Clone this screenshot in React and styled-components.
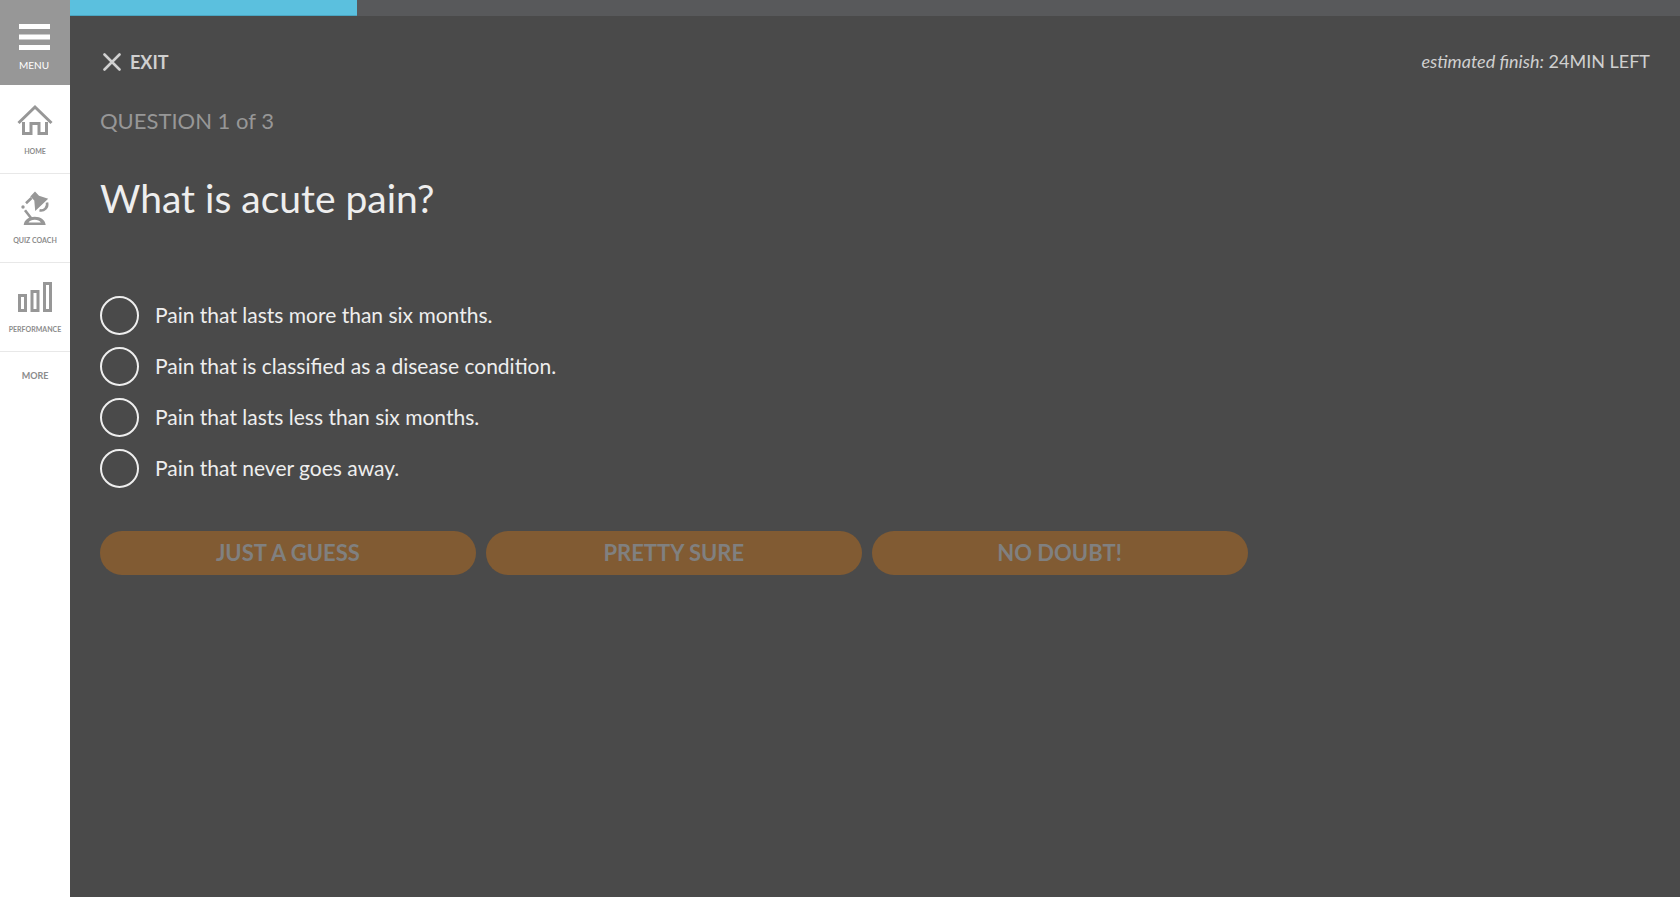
import React from "react";
import styled, { createGlobalStyle } from "styled-components";

const GlobalStyle = createGlobalStyle`
  *, *::before, *::after { box-sizing: border-box; }
  body {
    margin: 0;
    background: #4a4a4a;
    color: #eeeeee;
    font-family: Lato, "Liberation Sans", sans-serif;
  }
`;

const Shell = styled.div`
  display: flex;
  min-height: 100vh;
`;

const Sidebar = styled.nav`
  flex: 0 0 70px;
  display: flex;
  flex-direction: column;
  background: #ffffff;
`;

const MenuButton = styled.button`
  display: flex;
  flex-direction: column;
  align-items: center;
  gap: 8px;
  height: 85px;
  padding: 24px 2px 0 0;
  border: 0;
  background: #979797;
  color: #ffffff;
  font: 10px/14px Lato, sans-serif;
`;

const SideLink = styled.a`
  display: flex;
  flex-direction: column;
  align-items: center;
  gap: 6px;
  height: 89px;
  padding-top: 17px;
  border-bottom: 1px solid #e8e8e8;
  color: #8c8c8c;
  font-size: 7px;
  line-height: 14px;
  font-weight: 700;
  text-decoration: none;
`;

const MoreButton = styled.button`
  padding: 17px 0;
  border: 0;
  background: none;
  color: #8c8c8c;
  font: 700 9px/14px Lato, sans-serif;
`;

const Main = styled.main`
  flex: 1;
  min-width: 0;
`;

const ProgressTrack = styled.div`
  height: 16px;
  background: #58595b;
`;

const ProgressFill = styled.div`
  height: 100%;
  background: #5bc0de;
  border-bottom: 1px solid #4ba6c2;
`;

const TopBar = styled.header`
  display: flex;
  justify-content: space-between;
  align-items: flex-start;
  padding: 34px 30px 0;
`;

const ExitButton = styled.button`
  display: flex;
  align-items: center;
  gap: 9px;
  padding: 0 3px;
  border: 0;
  background: none;
  color: #d0d0d0;
  font: 700 18px/24px Lato, sans-serif;
`;

const Estimate = styled.p`
  margin: 0;
  color: #d0d0d0;
  font-size: 18px;
  line-height: 22px;
`;

const Quiz = styled.form`
  width: 75%;
  padding: 31px 30px;
`;

const Counter = styled.p`
  margin: 0;
  color: #979797;
  font-size: 22px;
  line-height: 32px;
`;

const Question = styled.h1`
  margin: 37px 0 0;
  font-size: 39px;
  line-height: 48px;
  font-weight: 400;
`;

const Answers = styled.fieldset`
  display: grid;
  gap: 12px;
  margin: 74px 0 0;
  padding: 0;
  border: 0;
`;

const Answer = styled.label`
  display: flex;
  align-items: flex-start;
  gap: 16px;
  font-size: 21px;
  line-height: 38px;
`;

const Radio = styled.input`
  appearance: none;
  width: 39px;
  height: 39px;
  margin: 0;
  border: 2px solid #eeeeee;
  border-radius: 50%;
  &:checked { background: #5bc0de; }
`;

const Choices = styled.div`
  display: grid;
  grid-template-columns: repeat(3, 1fr);
  gap: 10px;
  margin-top: 43px;
`;

const Choice = styled.button`
  height: 44px;
  padding: 0;
  border: 0;
  border-radius: 22px;
  background: #815b33;
  color: #808080;
  font: 700 22px/44px Lato, sans-serif;
`;

const MenuIcon = () => (
  <svg width="31" height="26" viewBox="0 0 31 26" fill="#fff" aria-hidden="true">
    <path d="M0 0h31v5H0zM0 10.500h31v5H0zM0 21h31v5H0z" />
  </svg>
);

const HomeIcon = () => (
  <svg width="36" height="36" viewBox="0 0 36 36" fill="none" stroke="#979797" strokeWidth="3" aria-hidden="true">
    <path d="M1.500 21 18 5l16.500 16" />
    <path d="M6.500 20v11.500h7.500V21.500h8v10h7.500V20" />
  </svg>
);

const LampIcon = () => (
  <svg width="36" height="36" viewBox="0 0 36 36" fill="none" stroke="#979797" aria-hidden="true">
    <path d="M18 .5 22 4.800 31.200 7.800 18.200 20 17.300 9.500 13.300 5.500z" fill="#979797" stroke="none" />
    <path d="M14.500 7 9 12.300M8 19.200l6.200 8" strokeWidth="2.600" />
    <circle cx="6" cy="16" r="1.700" fill="#979797" stroke="none" />
    <path d="M30 11.500a6.300 6.300 0 0 1-7.500 7.800" strokeWidth="2.600" />
    <path
      d="M6.700 34c.6-5.200 4.800-8.300 11-8.300s10.400 3.100 11 8.300zM11.500 31.500h12.400c-1.300-1.900-3.300-2.800-6.200-2.800s-4.900.9-6.200 2.800z"
      fill="#979797"
      fillRule="evenodd"
      stroke="none"
    />
  </svg>
);

const ChartIcon = () => (
  <svg width="36" height="36" viewBox="0 0 36 36" fill="none" stroke="#979797" strokeWidth="3" aria-hidden="true">
    <path d="M2.500 15.500h6v15h-6zM15 11.500h6v19h-6zM27.500 3.500h6v27h-6z" />
  </svg>
);

const CloseIcon = () => (
  <svg width="18" height="18" viewBox="0 0 18 18" stroke="#d0d0d0" strokeWidth="2.600" strokeLinecap="round" aria-hidden="true">
    <path d="M1.500 1.500l15 15M16.500 1.500l-15 15" />
  </svg>
);

const links = [
  { label: "HOME", Icon: HomeIcon },
  { label: "QUIZ COACH", Icon: LampIcon },
  { label: "PERFORMANCE", Icon: ChartIcon },
];

const answers = [
  "Pain that lasts more than six months.",
  "Pain that is classified as a disease condition.",
  "Pain that lasts less than six months.",
  "Pain that never goes away.",
];

const choices = ["JUST A GUESS", "PRETTY SURE", "NO DOUBT!"];

export default function App() {
  return (
    <Shell>
      <GlobalStyle />
      <Sidebar>
        <MenuButton type="button"><MenuIcon />MENU</MenuButton>
        {links.map(({ label, Icon }) => (
          <SideLink key={label} href="#"><Icon />{label}</SideLink>
        ))}
        <MoreButton type="button">MORE</MoreButton>
      </Sidebar>
      <Main>
        <ProgressTrack>
          <ProgressFill style={{ width: "17.8%" }} />
        </ProgressTrack>
        <TopBar>
          <ExitButton type="button"><CloseIcon />EXIT</ExitButton>
          <Estimate><em>estimated finish:</em> 24MIN LEFT</Estimate>
        </TopBar>
        <Quiz onSubmit={(e) => e.preventDefault()}>
          <Counter>QUESTION 1 of 3</Counter>
          <Question id="question">What is acute pain?</Question>
          <Answers aria-labelledby="question">
            {answers.map((text) => (
              <Answer key={text}>
                <Radio type="radio" name="answer" />
                {text}
              </Answer>
            ))}
          </Answers>
          <Choices>
            {choices.map((text) => (
              <Choice key={text} type="button" disabled>{text}</Choice>
            ))}
          </Choices>
        </Quiz>
      </Main>
    </Shell>
  );
}
